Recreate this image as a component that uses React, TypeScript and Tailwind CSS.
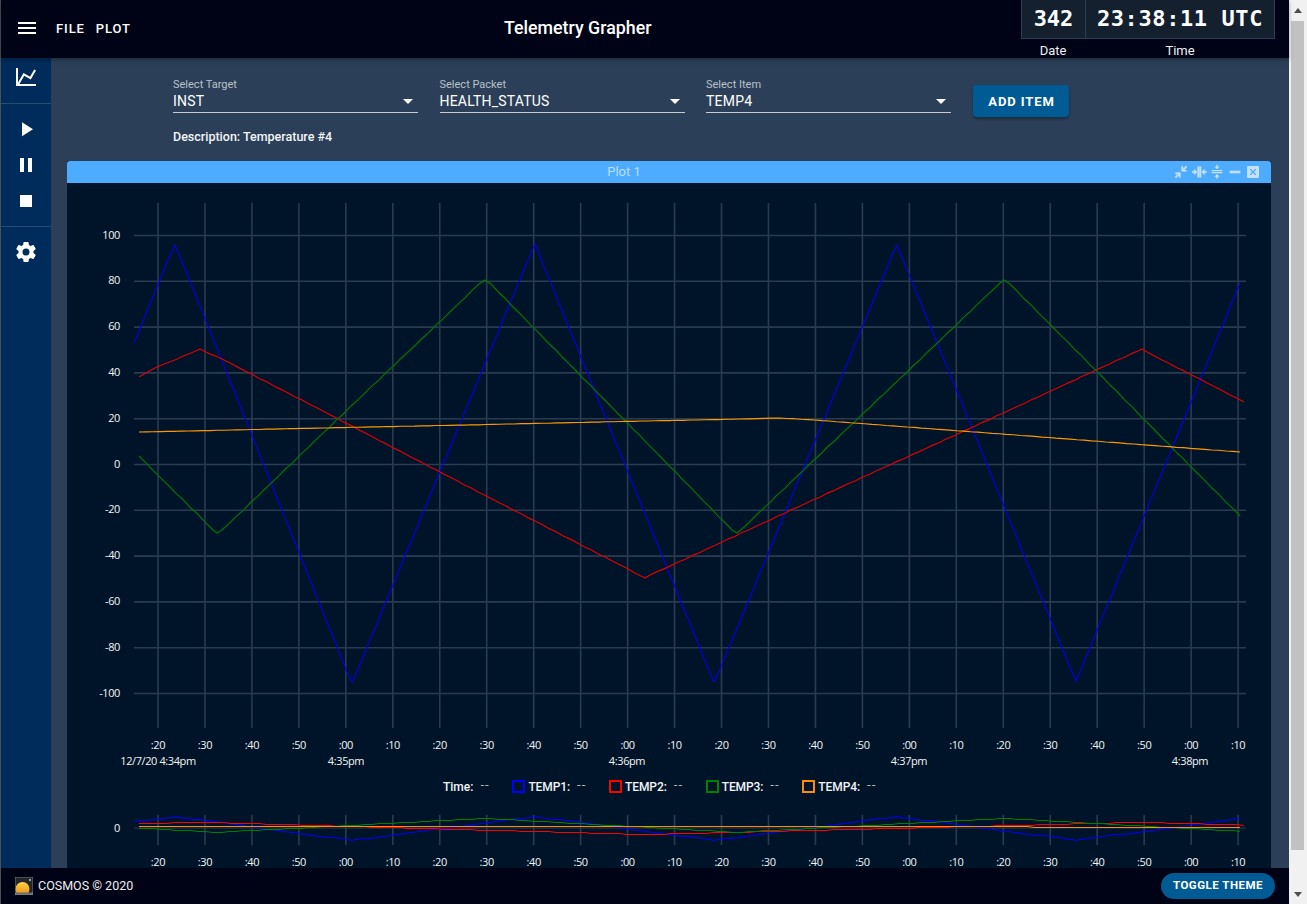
const mdi = {
  menu: "M3,6H21V8H3V6M3,11H21V13H3V11M3,16H21V18H3V16Z",
  chart: "M16,11.78L20.24,4.45L21.97,5.45L16.74,14.5L10.23,10.75L5.46,19H22V21H2V3H4V17.54L9.5,8L16,11.78Z",
  play: "M8,5.14V19.14L19,12.14L8,5.14Z",
  pause: "M14,19H18V5H14M6,19H10V5H6V19Z",
  stop: "M18,18H6V6H18V18Z",
  cog: "M12,15.5A3.5,3.5 0 0,1 8.5,12A3.5,3.5 0 0,1 12,8.5A3.5,3.5 0 0,1 15.5,12A3.5,3.5 0 0,1 12,15.5M19.43,12.97C19.47,12.65 19.5,12.33 19.5,12C19.5,11.67 19.47,11.34 19.43,11L21.54,9.37C21.73,9.22 21.78,8.95 21.66,8.73L19.66,5.27C19.54,5.05 19.27,4.96 19.05,5.05L16.56,6.05C16.04,5.66 15.5,5.32 14.87,5.07L14.5,2.42C14.46,2.18 14.25,2 14,2H10C9.75,2 9.54,2.18 9.5,2.42L9.13,5.07C8.5,5.32 7.96,5.66 7.44,6.05L4.95,5.05C4.73,4.96 4.46,5.05 4.34,5.27L2.34,8.73C2.21,8.95 2.27,9.22 2.46,9.37L4.57,11C4.53,11.34 4.5,11.67 4.5,12C4.5,12.33 4.53,12.65 4.57,12.97L2.46,14.63C2.27,14.78 2.21,15.05 2.34,15.27L4.34,18.73C4.46,18.95 4.73,19.03 4.95,18.95L7.44,17.94C7.96,18.34 8.5,18.68 9.13,18.93L9.5,21.58C9.54,21.82 9.75,22 10,22H14C14.25,22 14.46,21.82 14.5,21.58L14.87,18.93C15.5,18.67 16.04,18.34 16.56,17.94L19.05,18.95C19.27,19.03 19.54,18.95 19.66,18.73L21.66,15.27C21.78,15.05 21.73,14.78 21.54,14.63L19.43,12.97Z",
  caret: "M7,10L12,15L17,10H7Z",
  collapse: "M19.5,3.09L15,7.59V4H13V11H20V9H16.41L20.91,4.5L19.5,3.09M4,13V15H7.59L3.09,19.5L4.5,20.91L9,16.41V20H11V13H4Z",
  collapseH: "M13,20V4H15.03V20H13M10,20V4H12.03V20H10M5,8L9.03,12L5,16V13H2V11H5V8M20,16L16,12L20,8V11H23V13H20V16Z",
  collapseV: "M4,12H20V14H4V12M4,9H20V11H4V9M16,4L12,8L8,4H11V1H13V4H16M8,19L12,15L16,19H13V22H11V19H8Z",
  minimize: "M20,14H4V10H20",
  closeBox: "M19,3H5A2,2 0 0,0 3,5V19A2,2 0 0,0 5,21H19A2,2 0 0,0 21,19V5A2,2 0 0,0 19,3M15.6,17L12,13.4L8.4,17L7,15.6L10.6,12L7,8.4L8.4,7L12,10.6L15.6,7L17,8.4L13.4,12L17,15.6L15.6,17Z",
}

const Icon = ({ d, className }: { d: string; className: string }) => (
  <svg viewBox="0 0 24 24" className={className} fill="currentColor">
    <path d={d} />
  </svg>
)

type Pt = [number, number]

// the samples in the real plot wobble a little, so break each segment up
const wobble = (pts: Pt[], amount: number): Pt[] => {
  const out: Pt[] = []
  pts.forEach((p, i) => {
    out.push(p)
    const next = pts[i + 1]
    if (!next) return
    const n = Math.floor((next[0] - p[0]) / 7)
    for (let k = 1; k < n; k++) {
      const x = p[0] + ((next[0] - p[0]) * k) / n
      const y = p[1] + ((next[1] - p[1]) * k) / n
      out.push([x, y + Math.sin(x * 0.37) * amount + Math.sin(x * 0.91) * amount * 0.6])
    }
  })
  return out
}

const series: { name: string; color: string; wob: number; pts: Pt[] }[] = [
  {
    name: "TEMP1",
    color: "#0000e6",
    wob: 0.35,
    pts: [[134, 343], [171, 253], [175, 245], [179, 254], [348, 674], [352, 682], [356, 674], [531, 253], [535, 244], [539, 254], [710, 673], [714, 682], [718, 674], [893, 253], [897, 245], [901, 255], [1072, 672], [1076, 681], [1080, 672], [1240, 283]],
  },
  {
    name: "TEMP2",
    color: "#e00000",
    wob: 0.3,
    pts: [[139, 377], [157, 367], [175, 360], [200, 349], [224, 360], [641, 576], [645, 578], [650, 575], [1138, 351], [1142, 349], [1147, 352], [1244, 402]],
  },
  {
    name: "TEMP3",
    color: "#007800",
    wob: 0.4,
    pts: [[139, 456], [213, 530], [217, 533], [222, 530], [479, 284], [485, 280], [491, 284], [732, 530], [737, 533], [742, 529], [999, 284], [1004, 280], [1010, 284], [1240, 516]],
  },
  {
    name: "TEMP4",
    color: "#ff9800",
    wob: 0.1,
    pts: [[139, 432], [740, 419], [780, 418], [815, 420], [1240, 452]],
  },
]

const legendColors: Record<string, string> = {
  TEMP1: "#0000ff",
  TEMP2: "#ff0000",
  TEMP3: "#008000",
  TEMP4: "#ff8c00",
}

const seconds = [":20", ":30", ":40", ":50", ":00", ":10"]
const ticks = Array.from({ length: 24 }, (_, i) => ({ x: 158 + i * 46.96, label: seconds[i % 6] }))
const dates: [number, string][] = [
  [158, "12/7/20 4:34pm"],
  [346, "4:35pm"],
  [627, "4:36pm"],
  [909, "4:37pm"],
  [1190, "4:38pm"],
]
const yTicks = [100, 80, 60, 40, 20, 0, -20, -40, -60, -80, -100]
const tickFont = { fontFamily: "'Open Sans', sans-serif", fontSize: 11, letterSpacing: -0.4 }
const grid = "#2a3b50"

const line = (pts: Pt[]) => pts.map((p) => p.join(",")).join(" ")

const Select = ({ label, value }: { label: string; value: string }) => (
  <div className="w-[245px] h-[35px] border-b border-[#c9ced4] relative">
    <div className="text-[11px] leading-[12px] text-[#b9c0c8] pt-[1px]">{label}</div>
    <div className="text-[14px] leading-[17px] pt-[2px] box-content text-white font-normal tracking-[0.2px]">{value}</div>
    <Icon d={mdi.caret} className="absolute right-[-2px] top-[11px] w-6 h-6 text-white" />
  </div>
)

const MainChart = () => (
  <svg viewBox="67 183 1204 593" className="block w-full h-[593px] shrink-0">
    {yTicks.map((v, i) => {
      const y = 235.5 + i * 45.8
      return (
        <g key={v}>
          <line x1={134} x2={1246} y1={y} y2={y} stroke={grid} strokeWidth={1.6} />
          <text x={120} y={y + 3} textAnchor="end" fill="#f2f4f6" style={tickFont}>{v}</text>
        </g>
      )
    })}
    {ticks.map((t) => (
      <g key={t.x}>
        <line x1={t.x} x2={t.x} y1={203} y2={728} stroke={grid} strokeWidth={1.6} />
        <text x={t.x} y={749} textAnchor="middle" fill="#f2f4f6" style={tickFont}>{t.label}</text>
      </g>
    ))}
    {dates.map(([x, s]) => (
      <text key={s} x={x} y={765} textAnchor="middle" fill="#f2f4f6" style={tickFont}>{s}</text>
    ))}
    {series.map((s) => (
      <polyline key={s.name} points={line(wobble(s.pts, s.wob))} fill="none" stroke={s.color} strokeWidth={1.15} strokeLinejoin="round" />
    ))}
  </svg>
)

const Overview = () => (
  <svg viewBox="67 797 1204 71" className="block w-full h-[71px] shrink-0">
    <line x1={134} x2={1246} y1={828} y2={828} stroke={grid} strokeWidth={1} />
    <text x={120} y={832} textAnchor="end" fill="#f2f4f6" style={tickFont}>0</text>
    {ticks.map((t) => (
      <g key={t.x}>
        <line x1={t.x} x2={t.x} y1={815} y2={845} stroke={grid} strokeWidth={1.6} />
        <text x={t.x} y={866} textAnchor="middle" fill="#f2f4f6" style={tickFont}>{t.label}</text>
      </g>
    ))}
    {series.map((s) => (
      <polyline
        key={s.name}
        points={line(wobble(s.pts, 0).map(([x, y]): Pt => [x, Math.round(828 + (y - 464) * 0.054) + 0.5]))}
        fill="none"
        stroke={legendColors[s.name]}
        strokeWidth={1.1}
      />
    ))}
  </svg>
)

const Dashes = () => (
  <span className="ml-[7px] mr-[20px] w-[12px] font-light text-[13px] tracking-[1px] leading-[12px] -translate-y-[1px]">--</span>
)

const Legend = () => (
  <div className="h-[21px] shrink-0 flex items-center justify-center text-[12px] text-[#f2f4f6] font-medium pl-[4px]">
    <span>Time:</span>
    <Dashes />
    {series.map((s) => (
      <div key={s.name} className="flex items-center">
        <span className="w-[13px] h-[13px] border-2" style={{ borderColor: legendColors[s.name] }} />
        <span className="ml-[3px] tracking-[-0.1px]">{s.name}:</span>
        <Dashes />
      </div>
    ))}
  </div>
)

const Logo = () => (
  <svg viewBox="0 0 18 18" className="w-[18px] h-[18px]">
    <defs>
      <linearGradient id="sun" x1="0" y1="0" x2="0" y2="1">
        <stop offset="0" stopColor="#ffd23f" />
        <stop offset="1" stopColor="#e88a1a" />
      </linearGradient>
    </defs>
    <rect width="18" height="18" fill="#23262d" />
    <circle cx="7.5" cy="12" r="7" fill="url(#sun)" />
    <rect y="15.5" width="18" height="2.5" fill="#6b6d70" />
    <circle cx="15" cy="3" r="0.9" fill="#d8d8d8" />
    <rect x="0" y="0" width="18" height="18" fill="none" stroke="#8a8a8a" strokeWidth="0.8" />
  </svg>
)

export default function App() {
  return (
    <div className="flex w-[1307px] h-[904px] overflow-hidden bg-[#f1f1f1] font-['Roboto',sans-serif] text-white">
      <div className="w-[1px] bg-[#4a4f55]" />

      <div className="w-[1288px] flex flex-col">
        <header className="relative z-10 h-[58px] bg-[#000316] flex items-start shadow-[0_2px_4px_rgba(0,0,0,0.3)]">
          <div className="w-[52px] pl-[14px] pt-[16px]">
            <Icon d={mdi.menu} className="w-6 h-6" />
          </div>
          <div className="flex gap-[11px] pt-[21px] pl-[3px] text-[13px] leading-[16px] font-medium tracking-[0.9px]">
            <span>FILE</span>
            <span>PLOT</span>
          </div>
          <h1 className="absolute left-[503px] top-[17px] text-[17.8px] leading-[22px] font-medium">Telemetry Grapher</h1>
          <div className="ml-auto mr-[14px] w-[254px]">
            <div className="flex h-[39px] bg-[#14202e] border border-t-0 border-[#2a3f57] font-['DejaVu_Sans_Mono',monospace] font-bold text-[22px] leading-[38px] text-white">
              <div className="w-[64px] border-r border-[#2a3f57] text-center">342</div>
              <div className="flex-1 text-center tracking-[0.6px]">23:38:11 UTC</div>
            </div>
            <div className="flex text-[13px] leading-[16px] pt-[4px] text-[#eef0f2]">
              <div className="w-[64px] text-center">Date</div>
              <div className="flex-1 text-center">Time</div>
            </div>
          </div>
        </header>

        <div className="flex-1 flex min-h-0">
          <aside className="w-[50px] bg-[#002c5c] flex flex-col items-center">
            <div className="w-full h-[46px] border-b border-[#2a4a70] flex justify-center pt-[7px]">
              <Icon d={mdi.chart} className="w-6 h-6" />
            </div>
            <div className="w-full h-[123px] border-b border-[#2a4a70] flex flex-col items-center pt-[13px] gap-[12px]">
              <Icon d={mdi.play} className="w-6 h-6" />
              <Icon d={mdi.pause} className="w-6 h-6" />
              <Icon d={mdi.stop} className="w-6 h-6" />
            </div>
            <div className="pt-[13px]">
              <Icon d={mdi.cog} className="w-6 h-6" />
            </div>
          </aside>

          <main className="flex-1 bg-[#2b4058] pl-[16px] pr-[18px] flex flex-col min-w-0">
            <div className="flex pl-[106px] pt-[20px] gap-[21.5px] items-start">
              <Select label="Select Target" value="INST" />
              <Select label="Select Packet" value="HEALTH_STATUS" />
              <Select label="Select Item" value="TEMP4" />
              <button className="mt-[7px] w-[96px] h-[32px] rounded-[4px] bg-[#005a93] text-[13px] font-bold tracking-[0.9px] pl-[2px] pt-[1px] shadow-[0_2px_3px_rgba(0,0,0,0.35)]">
                ADD ITEM
              </button>
            </div>
            <div className="pl-[106px] pt-[11px] text-[12.5px] leading-[18px] font-medium text-[#f2f4f6]">
              Description: Temperature #4
            </div>

            <section className="mt-[15px] flex-1 flex flex-col min-h-0 bg-[#001429]">
              <div className="relative h-[22px] shrink-0 bg-[#4dacff] rounded-t-[3px] text-center text-[13px] leading-[22px] text-[#bcdfff] pr-[90px]">
                Plot 1
                <div className="absolute right-[10px] top-[3px] flex gap-[2px] text-[#c4e2ff]">
                  <Icon d={mdi.collapse} className="w-4 h-4 stroke-current stroke-[0.8]" />
                  <Icon d={mdi.collapseH} className="w-4 h-4 stroke-current stroke-[0.8]" />
                  <Icon d={mdi.collapseV} className="w-4 h-4" />
                  <Icon d={mdi.minimize} className="w-4 h-4" />
                  <Icon d={mdi.closeBox} className="w-4 h-4" />
                </div>
              </div>
              <MainChart />
              <Legend />
              <Overview />
            </section>
          </main>
        </div>

        <footer className="h-[36px] shrink-0 bg-[#000316] flex items-center pl-[14px] pr-[14px]">
          <Logo />
          <span className="ml-[5px] text-[12.5px] text-[#eceef0]">COSMOS © 2020</span>
          <button className="ml-auto w-[114px] h-[26px] rounded-full bg-[#005a93] text-[11.5px] font-bold tracking-[0.5px]">
            TOGGLE THEME
          </button>
        </footer>
      </div>

      <div className="w-[18px] flex flex-col items-center pr-[1px]">
        <div className="h-[21px] flex items-center justify-center">
          <div className="w-0 h-0 border-x-[4px] border-x-transparent border-b-[5px] border-b-[#505050]" />
        </div>
        <div className="w-[13px] h-[829px] bg-[#c1c1c1]" />
        <div className="flex-1 flex items-end pb-[7px]">
          <div className="w-0 h-0 border-x-[4px] border-x-transparent border-t-[5px] border-t-[#505050]" />
        </div>
      </div>
    </div>
  )
}
